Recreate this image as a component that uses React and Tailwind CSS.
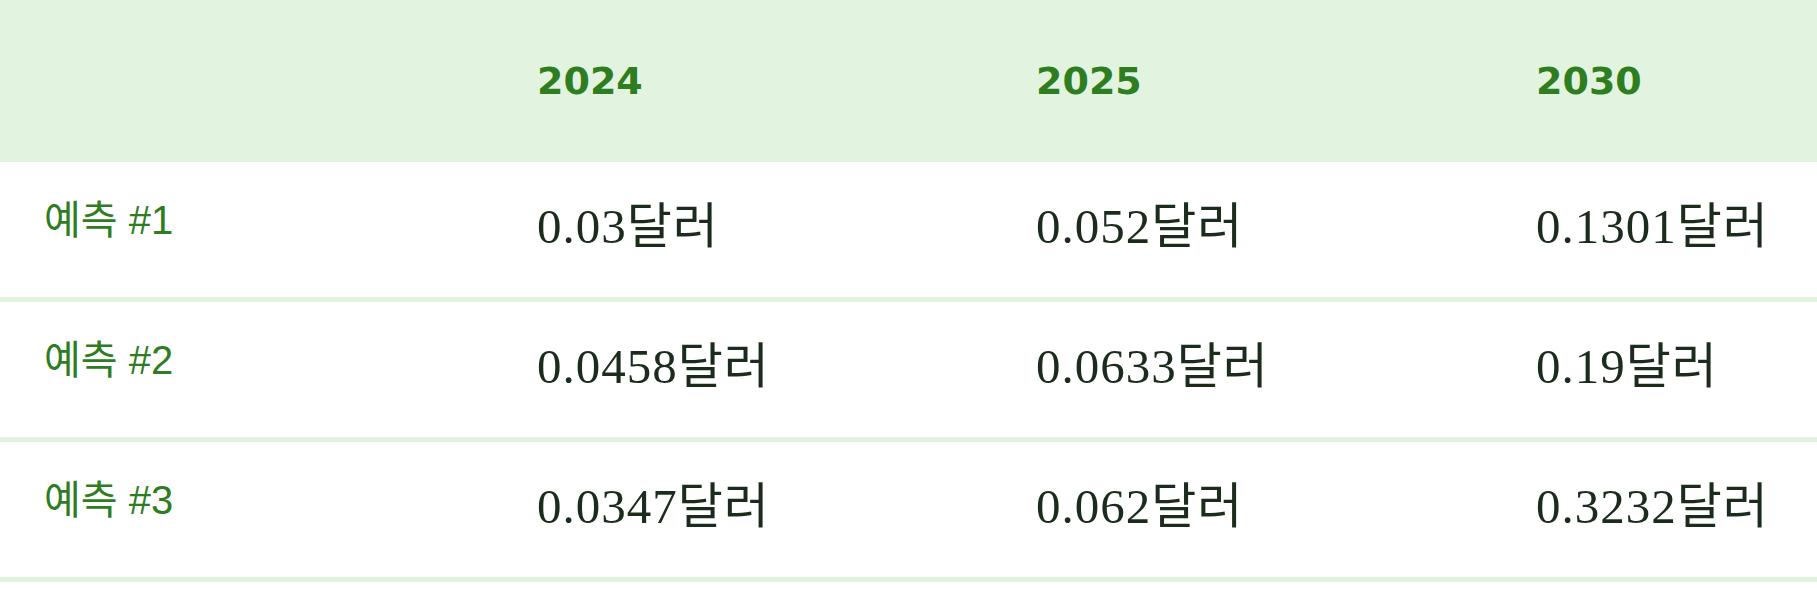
import React from 'react';

const years = ['2024', '2025', '2030'];

const rows = [
  { label: '예측 #1', values: ['0.03달러', '0.052달러', '0.1301달러'] },
  { label: '예측 #2', values: ['0.0458달러', '0.0633달러', '0.19달러'] },
  { label: '예측 #3', values: ['0.0347달러', '0.062달러', '0.3232달러'] },
];

// fixed column widths so the text starts line up with the screenshot
const cols = 'grid grid-cols-[493px_499px_500px_1fr]';

export default function App() {
  return (
    <div className="w-[1817px] h-[589px] bg-white overflow-hidden">
      {/* Header row */}
      <div className={`${cols} h-[162px] bg-[#e2f4df] items-center`}>
        <div />
        {years.map((y) => (
          <div
            key={y}
            className="pl-[44px] text-[38px] leading-[38px] font-bold text-[#2e7d20] [font-family:'DejaVu_Sans',Verdana,sans-serif]"
          >
            {y}
          </div>
        ))}
      </div>

      {/* Body rows */}
      {rows.map((r) => (
        <div key={r.label} className={`${cols} h-[140px] border-b-[5px] border-[#e2f4df]`}>
          <div className="pl-[44px] pt-[38px] text-[40px] leading-[40px] text-[#2f7d22] [font-family:'Liberation_Sans_Narrow','Liberation_Sans','Noto_Sans_CJK_KR',sans-serif]">
            {r.label}
          </div>
          {r.values.map((v, i) => (
            <div
              key={i}
              className="pl-[44px] pt-[40px] text-[49px] leading-[49px] tracking-[1px] text-[#1b2b1c] [font-family:'Liberation_Serif','Noto_Sans_CJK_KR',serif]"
            >
              {v}
            </div>
          ))}
        </div>
      ))}
    </div>
  );
}
